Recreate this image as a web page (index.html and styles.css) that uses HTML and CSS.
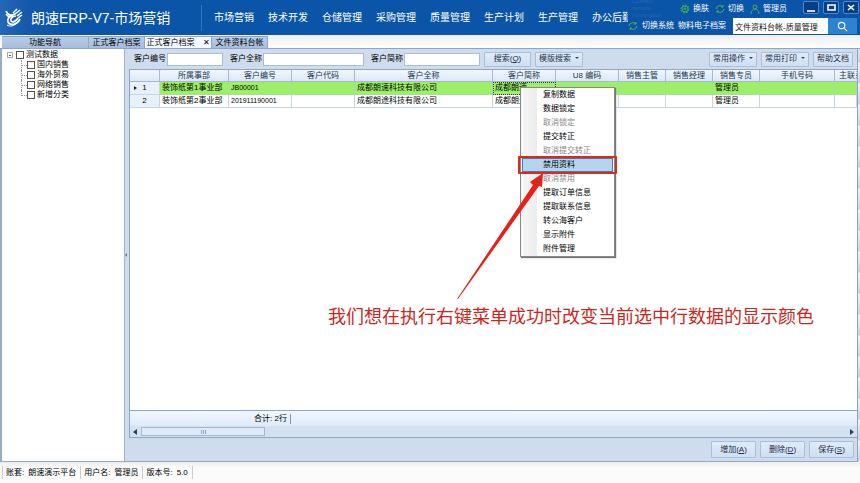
FILE: index.html
```html
<!DOCTYPE html>
<html lang="zh-CN">
<head>
<meta charset="utf-8">
<title>朗速ERP-V7-市场营销</title>
<link rel="stylesheet" href="styles.css">
</head>
<body>
<header class="top">
  <svg class="logo" viewBox="0 0 20 20" aria-hidden="true">
    <path d="M1 3c2 4 5 5 9 3M1 6c2 3 5 3 7 2" fill="none" stroke="#fff" stroke-width="1.6"/>
    <path d="M8 5l4-4M10 6l5-4M12 8l5-4M13 10l4-3" stroke="#fff" stroke-width="1.5"/>
    <path d="M10 6c-5 1-8 4-7 8 2 4 9 3 12-3M11 8c-4 0-6 3-5 5 2 2 5 0 7-3" fill="none" stroke="#fff" stroke-width="1.7"/>
    <path d="M2 17c3 2 7 1 10-2" fill="none" stroke="#fff"/>
  </svg>
  <h1>朗速ERP-V7-市场营销</h1>
  <nav class="mods">
    <a href="#">市场营销</a><a href="#">技术开发</a><a href="#">仓储管理</a><a href="#">采购管理</a><a href="#">质量管理</a><a href="#">生产计划</a><a href="#">生产管理</a><a href="#">办公后勤</a>
  </nav>
  <div class="tools">
    <div class="faint">Contact<br>service<br>information</div>
    <div class="user">
      <a href="#"><svg class="ic" viewBox="0 0 10 10"><circle cx="5" cy="5" r="4" stroke-dasharray="2 1"/><circle cx="5" cy="5" r="3"/><circle cx="5" cy="5" r="1"/></svg>换肤</a>
      <a href="#"><svg class="ic" viewBox="0 0 10 10"><path d="M1 5a4 4 0 0 1 7-2M8 1v2H6M9 5a4 4 0 0 1-7 2M2 9V7h2"/></svg>切换</a>
      <a href="#"><svg class="ic" viewBox="0 0 10 10"><circle cx="5" cy="3" r="2"/><path d="M1 10c0-3 2-5 4-5s4 2 4 5"/></svg>管理员</a>
      <div class="win">
        <button aria-label="最小化"><svg viewBox="0 0 14 11"><path d="M3 9h8"/></svg></button>
        <button aria-label="最大化"><svg viewBox="0 0 14 11"><path d="M4 3h7v5H4z"/></svg></button>
        <button aria-label="关闭"><svg viewBox="0 0 14 11"><path d="M4 3l6 5M10 3L4 8"/></svg></button>
      </div>
    </div>
    <div class="find">
      <a href="#"><svg class="ic" viewBox="0 0 10 10"><path d="M1 5a4 4 0 0 1 7-2M8 1v2H6M9 5a4 4 0 0 1-7 2M2 9V7h2"/></svg>切换系统</a>
      <a href="#">物料电子档案</a>
      <div class="box">
        <input aria-label="模块搜索" value="文件资料台帐-质量管理">
        <button aria-label="搜索"><svg viewBox="0 0 12 12"><circle cx="5" cy="5" r="3.5"/><path d="M8 8l3 3"/></svg></button>
      </div>
    </div>
  </div>
</header>
<div class="tabs">
  <button class="tab side">功能导航</button><button class="tab">正式客户档案</button><button class="tab on">正式客户档案<span>✕</span></button><button class="tab">文件资料台帐</button>
</div>
<main class="work">
  <aside class="tree">
    <ul>
      <li><label><i class="minus"></i><input type="checkbox">测试数据</label>
        <ul>
          <li><label><input type="checkbox">国内销售</label></li>
          <li><label><input type="checkbox">海外贸易</label></li>
          <li><label><input type="checkbox">网络销售</label></li>
          <li><label><input type="checkbox">新增分类</label></li>
        </ul>
      </li>
    </ul>
  </aside>
  <div class="split"><i></i></div>
  <section class="pane">
    <form class="filter">
      <label>客户编号<input class="f1"></label>
      <label>客户全称<input class="f2"></label>
      <label>客户简称<input class="f3"></label>
      <button type="button" class="btn go">搜索(<u>Q</u>)</button>
      <button type="button" class="btn">模版搜索<i class="dd"></i></button>
      <span class="grow"></span>
      <button type="button" class="btn">常用操作<i class="dd"></i></button>
      <button type="button" class="btn">常用打印<i class="dd"></i></button>
      <button type="button" class="btn">帮助文档</button>
    </form>
    <div class="grid">
      <table>
        <colgroup><col class="w30"><col class="w69"><col class="w63"><col class="w63"><col class="w138"><col class="w63"><col class="w63"><col class="w47"><col class="w47"><col class="w47"><col class="w75"><col></colgroup>
        <thead><tr><th></th><th>所属事部</th><th>客户编号</th><th>客户代码</th><th>客户全称</th><th>客户简称</th><th>U8 编码</th><th>销售主管</th><th>销售经理</th><th>销售专员</th><th>手机号码</th><th class="last">主联系人</th></tr></thead>
        <tbody>
          <tr class="sel"><th><i class="cur"></i>1</th><td>装饰纸第1事业部</td><td class="code">JB00001</td><td></td><td>成都朗速科技有限公司</td><td class="focus">成都朗速</td><td></td><td></td><td></td><td>管理员</td><td></td><td></td></tr>
          <tr><th>2</th><td>装饰纸第2事业部</td><td class="code">201911190001</td><td></td><td>成都朗途科技有限公司</td><td>成都朗途</td><td></td><td></td><td></td><td>管理员</td><td></td><td></td></tr>
        </tbody>
      </table>
      <div class="blank"></div>
      <div class="sum"><span>合计: 2行</span></div>
      <div class="scroll"><i class="left"></i><b><i></i></b><i class="right"></i></div>
    </div>
    <div class="acts">
      <button class="btn">增加(<u>A</u>)</button><button class="btn">删除(<u>D</u>)</button><button class="btn">保存(<u>S</u>)</button>
    </div>
  </section>
</main>
<footer class="status"><span>账套:&ensp;朗速演示平台</span><span>用户名:&ensp;管理员</span><span>版本号:&ensp;5.0</span></footer>

<menu class="ctx">
  <li><button>复制数据</button></li>
  <li><button>数据锁定</button></li>
  <li><button disabled>取消锁定</button></li>
  <li><button>提交转正</button></li>
  <li><button disabled>取消提交转正</button></li>
  <li class="hot"><button>禁用资料</button></li>
  <li><button disabled>取消禁用</button></li>
  <li><button>提取订单信息</button></li>
  <li><button>提取联系信息</button></li>
  <li><button>转公海客户</button></li>
  <li><button>显示附件</button></li>
  <li><button>附件管理</button></li>
</menu>
<svg class="arrow" viewBox="0 0 90 130" aria-hidden="true"><path d="M0 126L76 12 73 9 86 0 85 14 82 13 1 126z"/></svg>
<p class="note">我们想在执行右键菜单成功时改变当前选中行数据的显示颜色</p>
</body>
</html>
```
FILE: styles.css
```css
* { box-sizing: border-box; }
html, body { height: 100%; }
body {
  margin: 0;
  position: relative;
  display: flex;
  flex-direction: column;
  overflow: hidden;
  font: 8px/10px "Liberation Sans", "Noto Sans CJK SC", sans-serif;
  color: #000;
  background: repeating-linear-gradient(#f0f1f5 0, #cdd2de 20px, #f0f1f5 21px);
}
button, input { font: inherit; color: inherit; margin: 0; padding: 0; border: 0; }
button { white-space: nowrap; }
a { color: inherit; text-decoration: none; }
ul, menu { list-style: none; margin: 0; padding: 0; }

.top {
  flex: none;
  height: 35px;
  display: flex;
  align-items: center;
  background: linear-gradient(90deg, #2567b6 0, #1459ab 28px, #0b55a8 60px);
  color: #fff;
}
.logo { width: 20px; height: 20px; margin: 0 6px 0 5px; flex: none; }
h1 { flex: none; width: 170px; margin: 0; font-size: 14px; font-weight: 400; line-height: 20px; white-space: nowrap; }
.mods {
  flex: 1;
  min-width: 0;
  display: flex;
  gap: 14px;
  padding-left: 12px;
  border-left: 1px solid #3576bd;
  overflow: hidden;
  white-space: nowrap;
  font-size: 10px;
  line-height: 26px;
}
.tools { position: relative; flex: none; width: 232px; height: 35px; display: flex; flex-direction: column; }
.tools a { display: flex; align-items: center; gap: 4px; white-space: nowrap; }
.faint { position: absolute; left: 4px; top: -2px; font-size: 6px; line-height: 7px; color: #2565b0; }
.ic { width: 10px; height: 10px; fill: none; stroke: #4cae50; }
.user { display: flex; justify-content: flex-end; align-items: center; gap: 6px; height: 18px; padding-right: 1px; }
.user a { gap: 3px; }
.win { display: flex; gap: 4px; margin-left: 10px; align-self: flex-start; padding-top: 1px; }
.win button { width: 16px; height: 13px; background: #083f82; border: 1px solid #4e88c6; border-radius: 2px; }
.win svg { display: block; width: 14px; height: 11px; fill: none; stroke: #fff; stroke-width: 1.6; }
.find { display: flex; align-items: center; height: 16px; gap: 4px; padding-right: 3px; }
.box { flex: 1; min-width: 0; display: flex; margin-left: 3px; }
.find input { flex: 1; min-width: 0; height: 16px; padding-left: 2px; background: #fff; color: #111; }
.find button { width: 29px; height: 16px; background: #2d83d2; }
.find button svg { display: block; width: 11px; height: 11px; margin: auto; fill: none; stroke: #fff; stroke-width: 1.2; }

.tabs { flex: none; height: 14px; padding: 1px 0 0 2px; display: flex; align-items: stretch; background: linear-gradient(#eee, #fff); border-bottom: 1px solid #8fa5c4; }
.tab { width: 56px; background: linear-gradient(#b9cce6, #a5bddd); border: 1px solid #8ea5c6; border-width: 1px 1px 0 0; line-height: 11px; }
.tab.side { width: 87px; }
.tab.on { width: 67px; background: #f5f9ff; }
.tab.on span { margin-left: 8px; }

.work { flex: 1; min-height: 0; display: flex; margin-right: 2px; border-bottom: 1px solid #98a7c0; background: #cfdced; }
.tree { flex: none; width: 125px; background: #fff; border-left: 2px solid #9aabc6; border-right: 1px solid #9fb2d0; line-height: 10px; }
.tree label { display: flex; align-items: center; height: 10px; }
.tree input { appearance: none; width: 8px; height: 8px; margin-right: 2px; border: 1px solid #555; background: #fff; }
.tree > ul { padding: 1px 0 0 5px; }
.tree ul ul { margin-left: 14px; }
.tree li li { position: relative; padding-left: 6px; }
.tree li li::before { content: ""; position: absolute; left: 0; top: 0; width: 5px; height: 5px; border: dotted #999; border-width: 0 0 1px 1px; }
.tree li li:not(:last-child)::after { content: ""; position: absolute; left: 0; top: 5px; height: 5px; border-left: 1px dotted #999; }
.minus { width: 6px; height: 6px; margin-right: 3px; border: 1px solid #aaa; background: linear-gradient(#555, #555) center / 2px 1px no-repeat; }
.split { flex: none; width: 4px; display: flex; align-items: center; }
.split i { border: 2px solid transparent; border-right-color: #62799b; border-left: 0; }

.pane { flex: 1; min-width: 0; display: flex; flex-direction: column; border-right: 1px solid #8fa3c2; }
.filter { flex: none; height: 20px; display: flex; align-items: center; padding: 0 4px 0 5px; }
.filter label { display: flex; align-items: center; gap: 1px; margin-right: 7px; white-space: nowrap; }
.filter input { height: 13px; background: #fff; border: 1px solid #a9bdd8; }
.f1 { width: 56px; }
.f2 { width: 101px; }
.f3 { width: 76px; }
.btn {
  height: 15px;
  padding: 0 3px;
  margin-left: 4px;
  border: 1px solid #a9bfdc;
  border-radius: 1px;
  background: linear-gradient(#dfebf8, #cfdff2);
  color: #1e2f4a;
}
.go { width: 47px; margin-left: -3px; }
.grow { flex: 1; }
.dd { display: inline-block; margin: 0 0 2px 4px; border: 2px solid transparent; border-top-color: #445; border-bottom: 0; }

.grid { flex: 1; min-height: 0; display: flex; flex-direction: column; overflow: hidden; border: 1px solid #91a6c5; border-right: 0; background: #fff; }
table { width: 100%; table-layout: fixed; border-collapse: separate; border-spacing: 0; }
.w30 { width: 30px; } .w69 { width: 69px; } .w63 { width: 63px; } .w138 { width: 138px; }
.w47 { width: 47px; } .w75 { width: 75px; }
th, td { height: 13px; padding: 0; border: 1px solid #c5d6e8; border-width: 0 1px 1px 0; font-weight: 400; line-height: 10px; white-space: nowrap; overflow: hidden; }
td { text-align: left; padding-left: 2px; }
thead th { height: 12px; background: linear-gradient(#f1f7fd, #dbe8f6); border-color: #a5b9d4; color: #243752; }
thead .last { text-align: left; padding-left: 4px; border-right: 0; }
tbody th { background: #e8f1fb; position: relative; }
.sel td { background: #9cef67; border-color: #a8dca0; }
.code { font-size: 7px; }
.sel .focus { outline: 1px dotted #333; outline-offset: -1px; }
.cur { position: absolute; left: 4px; top: 4px; border: 2px solid transparent; border-left: 3px solid #222; border-right: 0; }
.blank { flex: 1; }
.sum { height: 16px; display: flex; align-items: center; border-top: 1px solid #91a6c5; background: linear-gradient(#f1f7fe, #ddeaf8); }
.sum span { width: 161px; text-align: right; padding-right: 3px; border-right: 1px solid #8195b3; }
.scroll { height: 11px; display: flex; align-items: center; padding: 0 3px; background: #d4e1f0; }
.scroll b { width: 124px; height: 9px; margin-left: 4px; display: flex; align-items: center; justify-content: center; border: 1px solid #a3b7d3; background: #dfeaf8; }
.scroll b i { width: 5px; height: 4px; background: repeating-linear-gradient(90deg, #91a6c5 0 1px, transparent 1px 2px); }
.left { border: 3px solid transparent; border-right: 4px solid #2c3e58; border-left: 0; }
.right { margin-left: auto; border: 3px solid transparent; border-left: 4px solid #2c3e58; border-right: 0; }
.acts { flex: none; height: 23px; display: flex; align-items: center; justify-content: flex-end; gap: 4px; padding-right: 3px; }
.acts .btn { width: 45px; height: 17px; margin: 0; }

.status { flex: none; height: 21px; display: flex; align-items: center; padding-left: 2px; background: linear-gradient(#eee, #fbfbfb 6px); }
.status span { padding: 0 4px 0 3px; border-left: 1px solid #ccc; line-height: 13px; }
.status span:last-child { border-right: 1px solid #ccc; }

.ctx {
  position: absolute;
  left: 520px;
  top: 87px;
  width: 95px;
  padding: 0 1px;
  border: 1px solid #888;
  background: linear-gradient(90deg, #f7f7f7, #ececec 16px, #fff 16px);
  box-shadow: 1px 1px 1px #777;
}
.ctx li { position: relative; height: 14px; }
.ctx button { display: block; width: 100%; height: 14px; padding-left: 21px; text-align: left; background: none; line-height: 14px; }
.ctx button:disabled { color: #888; }
.ctx .hot button { background: #b4d4f0; border: 1px solid #55779d; line-height: 12px; padding-left: 20px; }
.hot::after { content: ""; position: absolute; inset: -2px -4px; border: 2px solid #d52b23; border-radius: 1px; }
.arrow { position: absolute; left: 457px; top: 173px; width: 90px; height: 130px; fill: #e32219; }
.note { position: absolute; left: 328px; top: 304px; margin: 0; font-size: 18px; line-height: 26px; white-space: nowrap; color: #c92820; }
```
